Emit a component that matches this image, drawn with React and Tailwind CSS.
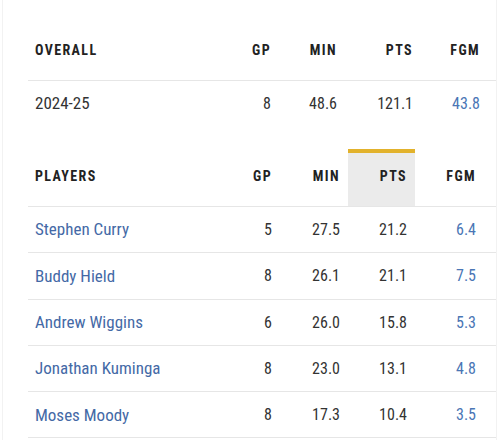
import React from "react";

const font = { fontFamily: "'Roboto Condensed', 'Liberation Sans Narrow', Roboto, sans-serif" };

const players = [
	{ name: "Stephen Curry", gp: 5, min: "27.5", pts: "21.2", fgm: "6.4" },
	{ name: "Buddy Hield", gp: 8, min: "26.1", pts: "21.1", fgm: "7.5" },
	{ name: "Andrew Wiggins", gp: 6, min: "26.0", pts: "15.8", fgm: "5.3" },
	{ name: "Jonathan Kuminga", gp: 8, min: "23.0", pts: "13.1", fgm: "4.8" },
	{ name: "Moses Moody", gp: 8, min: "17.3", pts: "10.4", fgm: "3.5" },
];

const head = "text-[14px] font-bold tracking-[0.1em] text-[#222] uppercase";

const App = () => {
	return (
		<div className="w-[500px] h-[440px] bg-white overflow-hidden" style={font}>
			<div className="ml-[2px] w-[495px] h-full border-l border-r border-[#f2f2f2] pl-[25px] pt-[27px]">
				{/* overall */}
				<div className="flex h-[54px] items-center pb-[7px] border-b border-[#e6e6e6]">
					<div className={`flex-1 pl-[7px] ${head}`}>Overall</div>
					<div className={`w-[60px] text-right pr-2 ${head}`}>GP</div>
					<div className={`w-[66px] text-right pr-2 ${head}`}>Min</div>
					<div className={`w-[76px] text-right pr-2 ${head}`}>Pts</div>
					<div className={`w-[67px] text-right pr-2 ${head}`}>Fgm</div>
					<div className="w-[8px]" />
				</div>
				<div className="flex h-[46px] items-center text-[16px] text-[#333]">
					<div className="flex-1 pl-[7px] text-[17px]">2024-25</div>
					<div className="w-[60px] text-right pr-2">8</div>
					<div className="w-[66px] text-right pr-2">48.6</div>
					<div className="w-[76px] text-right pr-2">121.1</div>
					<div className="w-[67px] text-right pr-2 text-[#4a76b5]">43.8</div>
					<div className="w-[8px]" />
				</div>

				{/* players */}
				<div className="mt-[22px] flex h-[58px]">
					<div className={`flex-1 pl-[7px] pt-[4px] flex items-center pb-[7px] border-b border-[#e6e6e6] ${head}`}>
						Players
					</div>
					<div className={`w-[60px] pt-[4px] flex items-center justify-end pb-[7px] pr-2 border-b border-[#e6e6e6] ${head}`}>
						GP
					</div>
					<div className={`w-[68px] pt-[4px] flex items-center justify-end pb-[7px] pr-2 border-b border-[#e6e6e6] ${head}`}>
						Min
					</div>
					<div className={`w-[67px] border-t-4 border-t-[#e2b22c] bg-[#ebebeb] flex items-center justify-end pb-[7px] pr-2 border-b border-b-[#e6e6e6] ${head}`}>
						Pts
					</div>
					<div className={`w-[69px] pt-[4px] flex items-center justify-end pb-[7px] pr-2 border-b border-[#e6e6e6] ${head}`}>
						Fgm
					</div>
					<div className="w-[12px] border-b border-[#e6e6e6]" />
				</div>
				{players.map((p) => (
					<div
						key={p.name}
						className="flex h-[46.3px] items-center border-b border-[#e6e6e6] text-[16px] text-[#333]"
					>
						<div className="flex-1 pl-[7px] pt-[1px] text-[17px] text-[#4469a6]">{p.name}</div>
						<div className="w-[60px] text-right pr-2 pt-[1px]">{p.gp}</div>
						<div className="w-[68px] text-right pr-2 pt-[1px]">{p.min}</div>
						<div className="w-[67px] text-right pr-2 pt-[1px]">{p.pts}</div>
						<div className="w-[69px] text-right pr-2 pt-[1px] text-[#4a76b5]">{p.fgm}</div>
						<div className="w-[12px]" />
					</div>
				))}
			</div>
		</div>
	);
};

export default App;
